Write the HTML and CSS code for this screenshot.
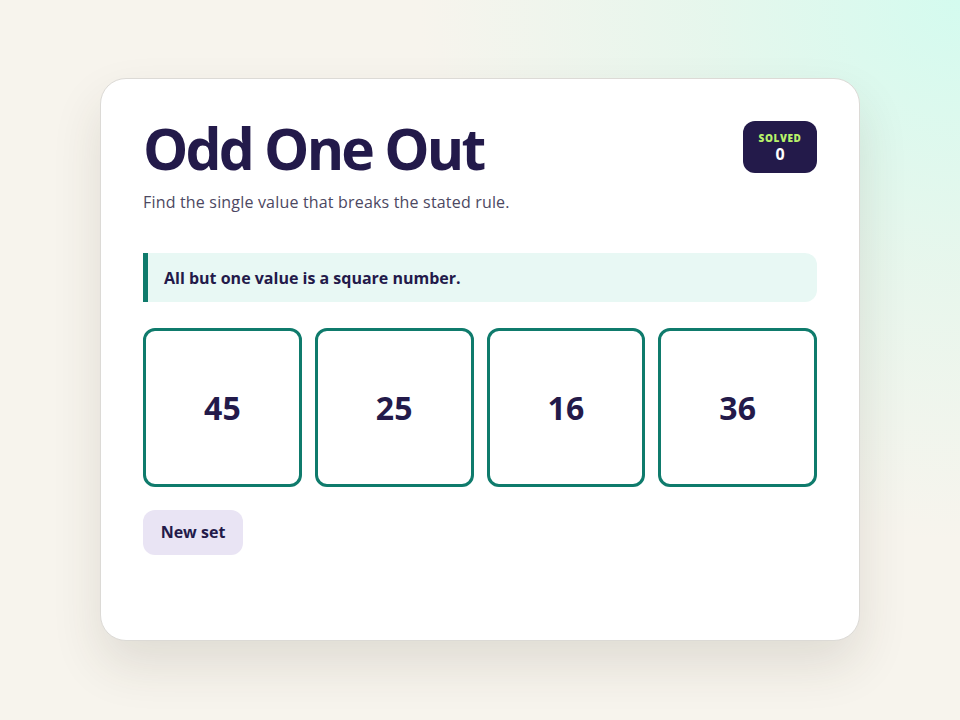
FILE: index.html
```html
<!DOCTYPE html>
<html lang="en">
<head>
<meta charset="utf-8">
<title>Odd One Out</title>
<link rel="stylesheet" href="styles.css">
</head>
<body>
<main class="card">
  <header class="head">
    <div class="titles">
      <h1 class="title">Odd One Out</h1>
      <p class="sub">Find the single value that breaks the stated rule.</p>
    </div>
    <div class="badge">
      <span class="badge-label">SOLVED</span>
      <span class="badge-num">0</span>
    </div>
  </header>
  <div class="rule">All but one value is a square number.</div>
  <div class="tiles">
    <button class="tile">45</button>
    <button class="tile">25</button>
    <button class="tile">16</button>
    <button class="tile">36</button>
  </div>
  <button class="btn">New set</button>
</main>
</body>
</html>
```
FILE: styles.css
```css
* { box-sizing: border-box; }
html, body { margin: 0; height: 100%; }
body {
  font-family: "Open Sans", "Noto Sans", sans-serif;
  background:
    radial-gradient(circle at 100% 0%, #d4fbef 0%, rgba(220,248,236,0.6) 22%, rgba(247,243,236,0) 45%),
    #f7f4ed;
  display: flex;
  justify-content: center;
  padding-top: 78px;
}
.card {
  width: 760px;
  height: 563px;
  background: #fff;
  border: 1px solid #dcdad6;
  border-radius: 26px;
  padding: 42px;
  box-shadow: 0 24px 50px rgba(60,50,30,0.12);
}
.head {
  display: flex;
  justify-content: space-between;
  align-items: flex-start;
}
.title {
  margin: 0;
  font-size: 57px;
  line-height: 54px;
  font-weight: 700;
  letter-spacing: -2.8px;
  color: #231a4a;
}
.sub {
  margin: 16px 0 0;
  font-size: 16px;
  letter-spacing: 0.18px;
  color: #4c4862;
}
.badge {
  width: 74px;
  height: 52px;
  padding-top: 2px;
  background: #231a4a;
  border-radius: 12px;
  display: flex;
  flex-direction: column;
  align-items: center;
  justify-content: center;
}
.badge-label {
  font-size: 10px;
  font-weight: 800;
  letter-spacing: 0.6px;
  color: #b8f26a;
  line-height: 12px;
}
.badge-num {
  font-size: 16px;
  font-weight: 700;
  color: #fff;
  line-height: 21px;
}
.rule {
  margin-top: 40px;
  height: 49px;
  display: flex;
  align-items: center;
  padding-left: 16px;
  background: #e8f8f4;
  border-left: 5px solid #0f7b6c;
  border-radius: 0 12px 12px 0;
  font-size: 16px;
  font-weight: 700;
  color: #231a4a;
}
.tiles {
  margin-top: 26px;
  display: grid;
  grid-template-columns: repeat(4, 1fr);
  gap: 13px;
}
.tile {
  aspect-ratio: 1 / 1;
  background: #fff;
  border: 3px solid #0f7b6c;
  border-radius: 12px;
  font-family: inherit;
  font-size: 32px;
  font-weight: 700;
  color: #231a4a;
  padding: 0;
}
.btn {
  margin-top: 23px;
  width: 100px;
  height: 45px;
  border: none;
  border-radius: 12px;
  background: #e9e4f4;
  font-family: inherit;
  font-size: 16px;
  font-weight: 700;
  color: #231a4a;
}
```
